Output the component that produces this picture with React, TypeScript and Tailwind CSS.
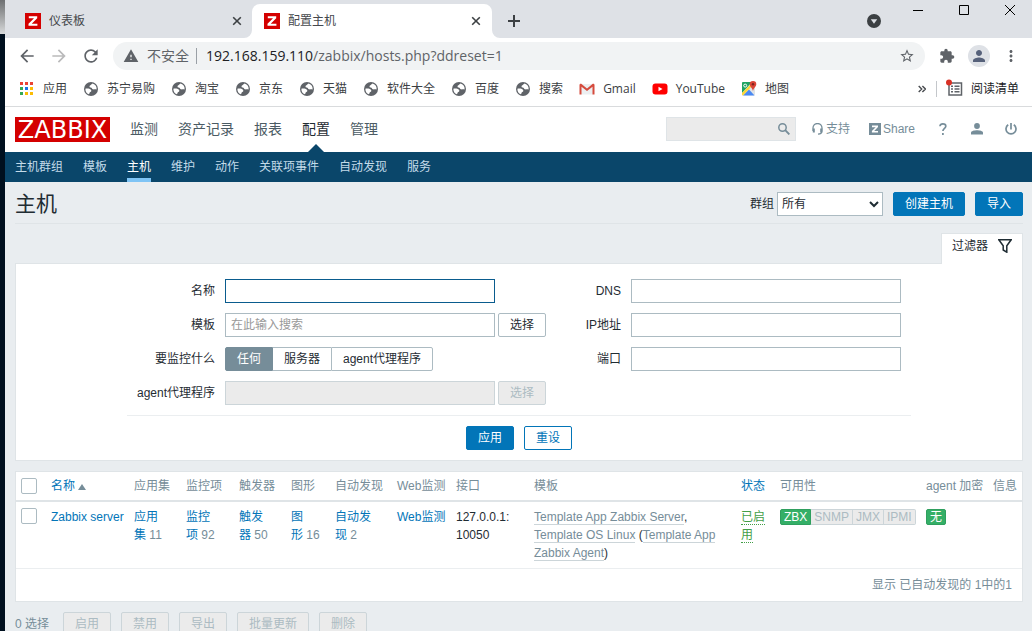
import React from "react";
import {
  MdArrowBack,
  MdArrowForward,
  MdExtension,
  MdMoreVert,
  MdPerson,
  MdRefresh,
  MdStarBorder,
  MdWarning,
} from "react-icons/md";

const chromeFont = "font-['Open_Sans','Noto_Sans_CJK_SC',sans-serif]";
const pageFont = "font-['Liberation_Sans','Noto_Sans_CJK_SC',sans-serif]";

function ZabbixFavicon() {
  return (
    <svg viewBox="0 0 16 16" className="size-4 shrink-0" aria-hidden="true">
      <rect width="16" height="16" fill="#d40000" />
      <path d="M3.800 3.200h8.400v2L6.700 10.700h5.700v2.100H3.500v-2L9 5.300H3.800z" fill="#fff" />
    </svg>
  );
}

function CloseGlyph() {
  return (
    <svg viewBox="0 0 10 10" className="size-[10px]" fill="none" stroke="#3c4043" strokeWidth="1.6" aria-hidden="true">
      <path d="M1.200 1.200l7.600 7.600M8.800 1.200L1.200 8.800" />
    </svg>
  );
}

function TabStrip() {
  return (
    <div className="flex h-[38px] items-center bg-[#dee1e6] text-xs text-[#45484c]">
      <div className="flex w-[247px] items-center gap-2 pl-5 pr-[10px] pt-1">
        <ZabbixFavicon />
        <span className="flex-1">仪表板</span>
        <button aria-label="关闭仪表板"><CloseGlyph /></button>
      </div>
      <div className="relative flex h-[34px] w-[240px] items-center gap-2 self-end rounded-t-lg bg-white pl-3 pr-[11px]">
        <svg viewBox="0 0 8 8" className="absolute -left-2 bottom-0 size-2" aria-hidden="true">
          <path d="M8 0v8H0a8 8 0 0 0 8-8z" fill="#fff" />
        </svg>
        <svg viewBox="0 0 8 8" className="absolute -right-2 bottom-0 size-2" aria-hidden="true">
          <path d="M0 0v8h8a8 8 0 0 1-8-8z" fill="#fff" />
        </svg>
        <ZabbixFavicon />
        <span className="flex-1">配置主机</span>
        <button aria-label="关闭配置主机"><CloseGlyph /></button>
      </div>
      <button aria-label="新标签页" className="ml-4 mt-1">
        <svg viewBox="0 0 12 12" className="size-3" stroke="#3c4043" strokeWidth="2">
          <path d="M6 0v12M0 6h12" />
        </svg>
      </button>
      <div className="flex-1" />
      <button aria-label="搜索标签页" className="mr-8 mt-1">
        <svg viewBox="0 0 14 14" className="size-[14px]">
          <circle cx="7" cy="7" r="7" fill="#3c4043" />
          <path d="M3.800 5.200h6.400L7 9.700z" fill="#dee1e6" />
        </svg>
      </button>
      <div className="flex gap-9 self-start pr-[17px] pt-[5px]">
        <button aria-label="最小化">
          <svg viewBox="0 0 10 10" className="size-[10px]" stroke="#000"><path d="M0 5.500h10" /></svg>
        </button>
        <button aria-label="最大化">
          <svg viewBox="0 0 10 10" className="size-[10px]" stroke="#000" fill="none"><path d="M.5.5h9v9h-9z" /></svg>
        </button>
        <button aria-label="关闭窗口">
          <svg viewBox="0 0 10 10" className="size-[10px]" stroke="#000" fill="none"><path d="M0 0l10 10M10 0L0 10" /></svg>
        </button>
      </div>
    </div>
  );
}

function AddressBar() {
  return (
    <div className="flex h-9 items-center bg-white pl-3 pr-3 text-[#5f6368]">
      <div className="flex gap-3">
        <button aria-label="后退"><MdArrowBack className="size-5" /></button>
        <button aria-label="前进" className="text-[#bababb]"><MdArrowForward className="size-5" /></button>
        <button aria-label="重新加载"><MdRefresh className="size-5" /></button>
      </div>
      <div className="ml-3 flex h-7 flex-1 items-center rounded-full bg-[#f1f3f4] pl-[10px] pr-[10px] text-sm leading-5">
        <MdWarning className="size-4" />
        <span className="ml-2">不安全</span>
        <span className="ml-[7px] h-4 w-px bg-[#9aa0a6]" />
        <span className="ml-[9px] flex-1 pb-px">
          <span className="text-[#202124]">192.168.159.110</span>/zabbix/hosts.php?ddreset=1
        </span>
        <button aria-label="为此标签页添加书签"><MdStarBorder className="size-4" /></button>
      </div>
      <button aria-label="扩展程序" className="ml-[14px]"><MdExtension className="size-4" /></button>
      <button aria-label="用户" className="ml-[13px] flex size-[22px] items-center justify-center rounded-full bg-[#dee1e6] text-[#56617a]">
        <MdPerson className="size-[18px]" />
      </button>
      <button aria-label="更多" className="ml-3"><MdMoreVert className="size-[18px]" /></button>
    </div>
  );
}

function AppsIcon() {
  const colors = ["#ea4335", "#ea4335", "#ea4335", "#34a853", "#1a73e8", "#fbbc04", "#34a853", "#fbbc04", "#fbbc04"];
  return (
    <svg viewBox="0 0 14 14" className="size-[14px]" aria-hidden="true">
      {colors.map((c, i) => (
        <rect key={i} x={(i % 3) * 5} y={Math.floor(i / 3) * 5} width="3" height="3" fill={c} />
      ))}
    </svg>
  );
}

function GlobeIcon() {
  return (
    <svg viewBox="0 0 14 14" className="size-[14px]" aria-hidden="true">
      <circle cx="7" cy="7" r="7" fill="#5f6368" />
      <path
        d="M8.600 1.500C7.400 2 7.600 2.700 6.400 3.200c-1.300.5-1.200 2.200.2 2.400 1.500.2 1.200 1.500 2.400 1.700 1.500.3 1.800-.4 3.600.2A5.700 5.700 0 0 0 8.600 1.500z"
        fill="#fff"
      />
      <path
        d="M1.400 6.700c1.200-.4 3.200-.2 4.500.2 1.700.5 2 2.600.4 3.200-.9.400-.5 1.200-1.400 2.200A5.700 5.700 0 0 1 1.400 6.700z"
        fill="#fff"
      />
    </svg>
  );
}

function GmailIcon() {
  return (
    <svg viewBox="0 0 14 14" className="size-[14px] overflow-visible" aria-hidden="true">
      <path d="M1 2h12v10.500H1z" fill="#eceff1" />
      <path d="M-.5 2.500L.9 1.500 7 6.500l6.100-5 1.400 1V12.500h-2V4.800L7 9 1.500 4.800v7.700h-2z" fill="#d54b3d" />
    </svg>
  );
}

function YouTubeIcon() {
  return (
    <svg viewBox="0 0 14 14" className="size-[14px] overflow-visible" aria-hidden="true">
      <rect x="-.5" y="1.500" width="15" height="11" rx="3" fill="#f00" />
      <path d="M5.500 4.700v4.600L9.500 7z" fill="#fff" />
    </svg>
  );
}

function MapsIcon() {
  return (
    <svg viewBox="0 0 14 14" className="size-[14px] overflow-visible" aria-hidden="true">
      <rect x="0" y="0" width="13" height="13.500" rx="1" fill="#dfe3e6" />
      <path d="M0 1a1 1 0 0 1 1-1h9L0 11z" fill="#1ea362" />
      <path d="M1 13.500L7 7.500l5.500 6z" fill="#4a89f3" />
      <path d="M0 11l9-9 1.500 1.500L1 13.500a1 1 0 0 1-1-1z" fill="#fdd835" />
      <circle cx="3.200" cy="3.600" r="1.500" fill="none" stroke="#fff" />
      <path d="M11-1a3.300 3.300 0 0 0-3.300 3.300c0 2.500 2.500 3.200 3.300 6.700.8-3.500 3.300-4.200 3.300-6.700A3.300 3.300 0 0 0 11-1z" fill="#db4437" />
      <circle cx="11" cy="2.300" r="1.200" fill="#7b231e" />
    </svg>
  );
}

const bookmarks: { label: string; Icon: () => React.ReactElement }[] = [
  { label: "应用", Icon: AppsIcon },
  { label: "苏宁易购", Icon: GlobeIcon },
  { label: "淘宝", Icon: GlobeIcon },
  { label: "京东", Icon: GlobeIcon },
  { label: "天猫", Icon: GlobeIcon },
  { label: "软件大全", Icon: GlobeIcon },
  { label: "百度", Icon: GlobeIcon },
  { label: "搜索", Icon: GlobeIcon },
  { label: "Gmail", Icon: GmailIcon },
  { label: "YouTube", Icon: YouTubeIcon },
  { label: "地图", Icon: MapsIcon },
];

function BookmarkBar() {
  return (
    <div className="flex h-[33px] items-center whitespace-nowrap border-b border-[#d9dbdd] bg-white pb-[2px] pl-[15px] pr-[13px] text-xs text-[#3c4043]">
      <div className="flex flex-1 gap-[17px]">
        {bookmarks.map(({ label, Icon }) => (
          <a key={label} href="#" className="flex items-center gap-[9px]">
            <Icon />
            {label}
          </a>
        ))}
      </div>
      <button aria-label="更多书签">
        <svg viewBox="0 0 8 8" className="size-2" fill="none" stroke="#4a4d51" strokeWidth="1.400">
          <path d="M.7 1l3 3-3 3M4.400 1l3 3-3 3" />
        </svg>
      </button>
      <span className="ml-[10px] h-4 w-px bg-[#c4c7cb]" />
      <button className="ml-[10px] flex items-center gap-2 text-[#202124]">
        <svg viewBox="0 0 16 16" className="size-4 overflow-visible" aria-hidden="true">
          <path d="M2 2h12.500v12H2z" fill="none" stroke="#5f6368" strokeWidth="1.500" />
          <path d="M4 5.200h2M7.500 5.200h5M4 8h2M7.500 8h5M4 10.800h2M7.500 10.800h5" stroke="#5f6368" strokeWidth="1.400" />
          <circle cx="2" cy="1.500" r="3" fill="#d93025" />
        </svg>
        阅读清单
      </button>
    </div>
  );
}

const mainMenu = ["监测", "资产记录", "报表", "配置", "管理"];
const subMenu = ["主机群组", "模板", "主机", "维护", "动作", "关联项事件", "自动发现", "服务"];

function ZabbixHeader() {
  return (
    <header>
      <div className="flex h-[45px] items-center bg-white pl-[10px] pr-[15px] text-[#768d99]">
        <a href="#" className="flex h-[25px] w-[95px] items-center justify-center bg-[#d40000] font-['DejaVu_Sans',sans-serif] text-2xl leading-none text-white">
          ZABBIX
        </a>
        <nav className="ml-5 flex flex-1 gap-5 self-stretch text-sm text-[#4b5b64]">
          {mainMenu.map((item) => (
            <a key={item} href="#" className={item === "配置" ? "relative flex items-center pb-[2px] text-[#1f2c33]" : "flex items-center pb-[2px]"}>
              {item}
              {item === "配置" && (
                <svg viewBox="0 0 16 8" className="absolute bottom-0 left-[6px] h-2 w-4" aria-hidden="true">
                  <path d="M0 8l8-8 8 8z" fill="#0a466a" />
                </svg>
              )}
            </a>
          ))}
        </nav>
        <div className="flex items-center pb-[2px] text-xs">
          <div className="flex h-6 w-[130px] items-center border border-[#dfe4e7] bg-[#ebebeb] pr-[5px]">
            <input aria-label="搜索" className="min-w-0 flex-1 bg-transparent px-1 outline-none" />
            <button aria-label="搜索">
              <svg viewBox="0 0 12 12" className="size-3" fill="none" stroke="#768d99" aria-hidden="true">
                <circle cx="4.500" cy="4.500" r="3.700" strokeWidth="1.500" />
                <path d="M7.200 7.200l4.200 4.200" strokeWidth="1.900" />
              </svg>
            </button>
          </div>
          <a href="#" className="ml-4 flex items-center gap-[3px]">
            <svg viewBox="0 0 11 12" className="h-3 w-[11px]" fill="none" stroke="#768d99" aria-hidden="true">
              <path d="M1 8V5a4.500 4.500 0 0 1 9 0v3c0 2-1.500 3-4 3.200" strokeWidth="1.300" />
              <path d="M1.800 5.500v4M9.200 5.500v4" strokeWidth="2" />
            </svg>
            支持
          </a>
          <a href="#" className="ml-[19px] flex items-center gap-[2px]">
            <svg viewBox="0 0 12 12" className="size-3" aria-hidden="true">
              <rect width="12" height="12" fill="#768d99" />
              <path d="M3 2.500h6v1.600L5.200 8H9v1.600H2.900V8l3.800-3.800H3z" fill="#fff" />
            </svg>
            Share
          </a>
          <a href="#" aria-label="帮助" className="ml-6">
            <svg viewBox="0 0 8 12" className="h-3 w-2" fill="none" stroke="#768d99" strokeWidth="1.700">
              <path d="M1 3.300C1 1.700 2.200.9 3.800.9s3 .8 3 2.300c0 2-2.900 2.300-2.900 4.900M3.900 10v2" />
            </svg>
          </a>
          <a href="#" aria-label="用户资料" className="ml-6">
            <svg viewBox="0 0 12 12" className="size-3" fill="#768d99">
              <circle cx="6" cy="3" r="2.900" />
              <path d="M0 11.500V9.700C0 8 3.500 7.300 6 7.300s6 .7 6 2.400v1.800z" />
            </svg>
          </a>
          <a href="#" aria-label="退出" className="ml-[22px]">
            <svg viewBox="0 0 12 12" className="size-3" fill="none" stroke="#768d99" strokeWidth="1.700">
              <path d="M6 0v6.500M3.200 1.800a5 5 0 1 0 5.600 0" />
            </svg>
          </a>
        </div>
      </div>
      <nav className="flex h-[30px] gap-5 bg-[#0a466a] px-[10px] text-xs text-[#c3dbe9]">
        {subMenu.map((item) => (
          <a
            key={item}
            href="#"
            className={item === "主机" ? "flex items-center border-y-4 border-t-transparent border-b-[#7fc4f5] text-white" : "flex items-center"}
          >
            {item}
          </a>
        ))}
      </nav>
    </header>
  );
}

const btn = "h-6 rounded-[2px] border px-[11px] whitespace-nowrap";
const primary = "border-[#0275b8] bg-[#0275b8] text-white";
const disabledBtn = "border-[#ccd5d9] bg-[#ebebeb] text-[#acbbc2]";
const inputBox = "h-6 w-[270px] border border-[#acbbc2] bg-white px-[5px] outline-none placeholder:text-[#999999]";

function TitleBar() {
  return (
    <div className="flex h-[42px] items-center border-b border-[#dfe4e7] pt-[2px]">
      <h1 className="flex-1 text-[21px] leading-6">主机</h1>
      <label htmlFor="group" className="mr-[3px]">群组</label>
      <select id="group" className="h-6 w-[106px] border border-[#acbbc2] bg-white">
        <option>所有</option>
      </select>
      <button className={`${btn} ${primary} ml-[10px]`}>创建主机</button>
      <button className={`${btn} ${primary} ml-[10px]`}>导入</button>
    </div>
  );
}

function FilterPanel() {
  return (
    <section>
      <div className="flex justify-end pt-[9px]">
        <a href="#" className="relative -mb-px flex h-[31px] items-center gap-[10px] border border-b-0 border-[#dfe4e7] bg-white pb-[7px] pl-[10px] pr-[10px]">
          过滤器
          <svg viewBox="0 0 14 14" className="size-[14px]" fill="none" stroke="#1f2c33" strokeWidth="1.500" aria-hidden="true">
            <path d="M.8.8h12.400L8.800 6.800v6.400L5.200 11V6.800z" />
          </svg>
        </a>
      </div>
      <form className="border border-[#dfe4e7] bg-white pb-[10px] pt-[15px]" onSubmit={(e) => e.preventDefault()}>
        <div className="mx-auto w-fit">
          <div className="flex border-b border-[#ebeef0] pb-[10px] pr-[10px]">
            <div className="grid grid-cols-[88px_auto] items-center gap-x-[10px] gap-y-[10px]">
              <label htmlFor="name" className="text-right">名称</label>
              <input id="name" className="h-6 w-[270px] border border-[#0a5c8e] bg-white px-[5px] outline-none" />
              <label htmlFor="template" className="text-right">模板</label>
              <div className="flex gap-[3px]">
                <input id="template" placeholder="在此输入搜索" className={inputBox} />
                <button type="button" className={`${btn} border-[#acbbc2] bg-white`}>选择</button>
              </div>
              <span id="monitored" className="text-right">要监控什么</span>
              <div role="radiogroup" aria-labelledby="monitored" className="flex">
                <label className="flex h-6 items-center rounded-l-[2px] border border-[#768d99] bg-[#768d99] px-[11px] text-white">
                  <input type="radio" name="by" defaultChecked className="sr-only" />
                  任何
                </label>
                <label className="flex h-6 items-center border-y border-[#acbbc2] bg-white px-[11px]">
                  <input type="radio" name="by" className="sr-only" />
                  服务器
                </label>
                <label className="flex h-6 items-center rounded-r-[2px] border border-[#acbbc2] bg-white px-[11px]">
                  <input type="radio" name="by" className="sr-only" />
                  agent代理程序
                </label>
              </div>
              <label htmlFor="proxy" className="text-right">agent代理程序</label>
              <div className="flex gap-[3px]">
                <input id="proxy" disabled className="h-6 w-[270px] border border-[#ccd5d9] bg-[#ebebeb]" />
                <button type="button" disabled className={`${btn} ${disabledBtn}`}>选择</button>
              </div>
            </div>
            <div className="grid grid-cols-[75px_auto] content-start items-center gap-x-[10px] gap-y-[10px]">
              <label htmlFor="dns" className="text-right">DNS</label>
              <input id="dns" className={inputBox} />
              <label htmlFor="ip" className="text-right">IP地址</label>
              <input id="ip" className={inputBox} />
              <label htmlFor="port" className="text-right">端口</label>
              <input id="port" className={inputBox} />
            </div>
          </div>
          <div className="flex justify-center gap-[10px] pt-[10px]">
            <button className={`${btn} ${primary}`}>应用</button>
            <button type="reset" className={`${btn} border-[#0275b8] bg-white text-[#0275b8]`}>重设</button>
          </div>
        </div>
      </form>
    </section>
  );
}

const th = "px-[5px] text-left font-normal whitespace-nowrap";
const td = "px-[5px] pb-[6px] pt-[6px] align-top";
const link = "text-[#0275b8]";
const tpl = "border-b border-[#ccd5d9] text-[#768d99]";
const checkbox = "block size-4 appearance-none rounded-[2px] border border-[#acbbc2] bg-white";

function HostTable() {
  return (
    <div className="mt-[10px] border border-[#dfe4e7] bg-white">
      <table className="w-full table-fixed border-collapse leading-[18px]">
        <colgroup>
          <col className="w-[30px]" />
          <col className="w-[83px]" />
          <col className="w-[52px]" />
          <col className="w-[53px]" />
          <col className="w-[52px]" />
          <col className="w-[44px]" />
          <col className="w-[62px]" />
          <col className="w-[59px]" />
          <col className="w-[78px]" />
          <col />
          <col className="w-[39px]" />
          <col className="w-[146px]" />
          <col className="w-[67px]" />
          <col className="w-[34px]" />
        </colgroup>
        <thead>
          <tr className="h-[29px] border-b-2 border-[#dfe4e7] text-[#768d99]">
            <th className="px-[5px]"><input type="checkbox" aria-label="全选" className={checkbox} /></th>
            <th className={th}>
              <a href="#" className={link}>名称</a>
              <svg viewBox="0 0 8 6" className="ml-[3px] inline-block h-[6px] w-2" aria-hidden="true">
                <path d="M0 6l4-6 4 6z" fill="#768d99" />
              </svg>
            </th>
            <th className={th}>应用集</th>
            <th className={th}>监控项</th>
            <th className={th}>触发器</th>
            <th className={th}>图形</th>
            <th className={th}>自动发现</th>
            <th className={th}>Web监测</th>
            <th className={th}>接口</th>
            <th className={th}>模板</th>
            <th className={th}><a href="#" className={link}>状态</a></th>
            <th className={th}>可用性</th>
            <th className={th}>agent 加密</th>
            <th className={th}>信息</th>
          </tr>
        </thead>
        <tbody>
          <tr className="border-b border-[#ebeef0] text-[#768d99]">
            <td className={td}><input type="checkbox" aria-label="Zabbix server" className={checkbox} /></td>
            <td className={`${td} whitespace-nowrap`}><a href="#" className={link}>Zabbix server</a></td>
            <td className={td}><a href="#" className={link}>应用<br />集</a> 11</td>
            <td className={td}><a href="#" className={link}>监控<br />项</a> 92</td>
            <td className={td}><a href="#" className={link}>触发<br />器</a> 50</td>
            <td className={td}><a href="#" className={link}>图<br />形</a> 16</td>
            <td className={td}><a href="#" className={link}>自动发<br />现</a> 2</td>
            <td className={`${td} whitespace-nowrap`}><a href="#" className={link}>Web监测</a></td>
            <td className={`${td} text-[#1f2c33]`}>127.0.0.1: 10050</td>
            <td className={`${td} text-[#1f2c33]`}>
              <a href="#" className={tpl}>Template App Zabbix Server</a>,{" "}
              <a href="#" className={tpl}>Template OS Linux</a> (<a href="#" className={tpl}>Template App Zabbix Agent</a>)
            </td>
            <td className={td}><a href="#" className="border-b border-dotted border-[#429e47] text-[#429e47]">已启用</a></td>
            <td className={td}>
              <div className="mt-px flex h-4 w-fit leading-[14px]">
                <span className="rounded-l-[2px] border border-[#2f9f5e] bg-[#34af67] px-[3px] text-white">ZBX</span>
                <span className="border-y border-r border-[#ccd5d9] bg-[#ebebeb] px-[3px] text-[#acbbc2]">SNMP</span>
                <span className="border-y border-r border-[#ccd5d9] bg-[#ebebeb] px-[3px] text-[#acbbc2]">JMX</span>
                <span className="rounded-r-[2px] border-y border-r border-[#ccd5d9] bg-[#ebebeb] px-[3px] text-[#acbbc2]">IPMI</span>
              </div>
            </td>
            <td className={td}>
              <div className="mt-px h-4 w-fit rounded-[2px] border border-[#2f9f5e] bg-[#34af67] px-[3px] leading-[14px] text-white">无</div>
            </td>
            <td className={td} />
          </tr>
        </tbody>
        <tfoot>
          <tr className="h-8">
            <td colSpan={14} className="px-[10px] text-right text-[#768d99]">显示 已自动发现的 1中的1</td>
          </tr>
        </tfoot>
      </table>
    </div>
  );
}

function ActionBar() {
  return (
    <div className="flex items-center pt-[10px] text-[#768d99]">
      <span className="mr-[14px]">0 选择</span>
      <div className="flex gap-[10px]">
        {["启用", "禁用", "导出", "批量更新", "删除"].map((label) => (
          <button key={label} disabled className={`${btn} ${disabledBtn}`}>{label}</button>
        ))}
      </div>
    </div>
  );
}

export default function App() {
  return (
    <div className="flex h-screen overflow-hidden">
      <div className="flex w-[5px] shrink-0 flex-col bg-[#00101f]">
        <div className="h-[34px] bg-linear-to-b from-[#6e7072] to-[#d8dadb]" />
      </div>
      <div className="flex min-w-0 flex-1 flex-col overflow-hidden">
        <div className={`shrink-0 ${chromeFont}`}>
          <TabStrip />
          <AddressBar />
          <BookmarkBar />
        </div>
        <div className={`min-h-0 flex-1 overflow-hidden bg-[#e9edf0] text-xs text-[#1f2c33] ${pageFont}`}>
          <ZabbixHeader />
          <main className="pl-[10px] pr-[9px]">
            <TitleBar />
            <FilterPanel />
            <HostTable />
            <ActionBar />
          </main>
        </div>
      </div>
    </div>
  );
}
